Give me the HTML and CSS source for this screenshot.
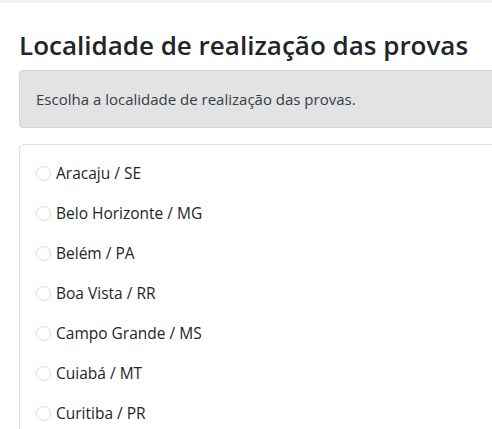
FILE: index.html
```html
<!DOCTYPE html>
<html lang="pt-br">
<head>
  <meta charset="UTF-8" />
  <meta name="viewport" content="width=device-width, initial-scale=1" />
  <title>Localidade</title>
  <link rel="stylesheet" href="styles.css">
</head>
<body>

<div class="topbar"></div>

<main class="container">
  <h3 class="titulo">Localidade de realização das provas</h3>

  <div class="aviso">Escolha a localidade de realização das provas.</div>

  <div class="cartao">
    <label class="opcao"><input type="radio" name="local" value="SE"> Aracaju / SE</label>
    <label class="opcao"><input type="radio" name="local" value="MG"> Belo Horizonte / MG</label>
    <label class="opcao"><input type="radio" name="local" value="PA"> Belém / PA</label>
    <label class="opcao"><input type="radio" name="local" value="RR"> Boa Vista / RR</label>
    <label class="opcao"><input type="radio" name="local" value="MS"> Campo Grande / MS</label>
    <label class="opcao"><input type="radio" name="local" value="MT"> Cuiabá / MT</label>
    <label class="opcao"><input type="radio" name="local" value="PR"> Curitiba / PR</label>
  </div>
</main>

</body>
</html>
```

FILE: styles.css
```css
html, body {
  margin: 0;
  padding: 0;
  overflow: hidden;
  background: #ffffff;
  font-family: "Open Sans", Arial, sans-serif;
  color: #212529;
}

.topbar {
  height: 3px;
  background: #f0f0f0;
}

.container {
  width: 560px;
  padding: 0 19px;
}

.titulo {
  margin: 26px 0 9px;
  font-size: 26px;
  font-weight: 600;
  line-height: 32px;
}

.aviso {
  background: #e2e3e5;
  border: 1px solid #d3d5d8;
  border-radius: 4px;
  padding: 16px 16px;
  font-size: 15px;
  line-height: 24px;
  color: #383d41;
}

.cartao {
  margin-top: 16px;
  border: 1px solid #dcdcdc;
  border-radius: 5px;
  padding: 8px 16px;
}

.opcao {
  display: flex;
  align-items: center;
  gap: 5px;
  height: 40px;
  font-size: 15.5px;
  cursor: pointer;
}

.opcao input {
  appearance: none;
  margin: 0;
  width: 15px;
  height: 15px;
  border: 1px solid #dadada;
  border-radius: 50%;
  background: #fff;
}
```
